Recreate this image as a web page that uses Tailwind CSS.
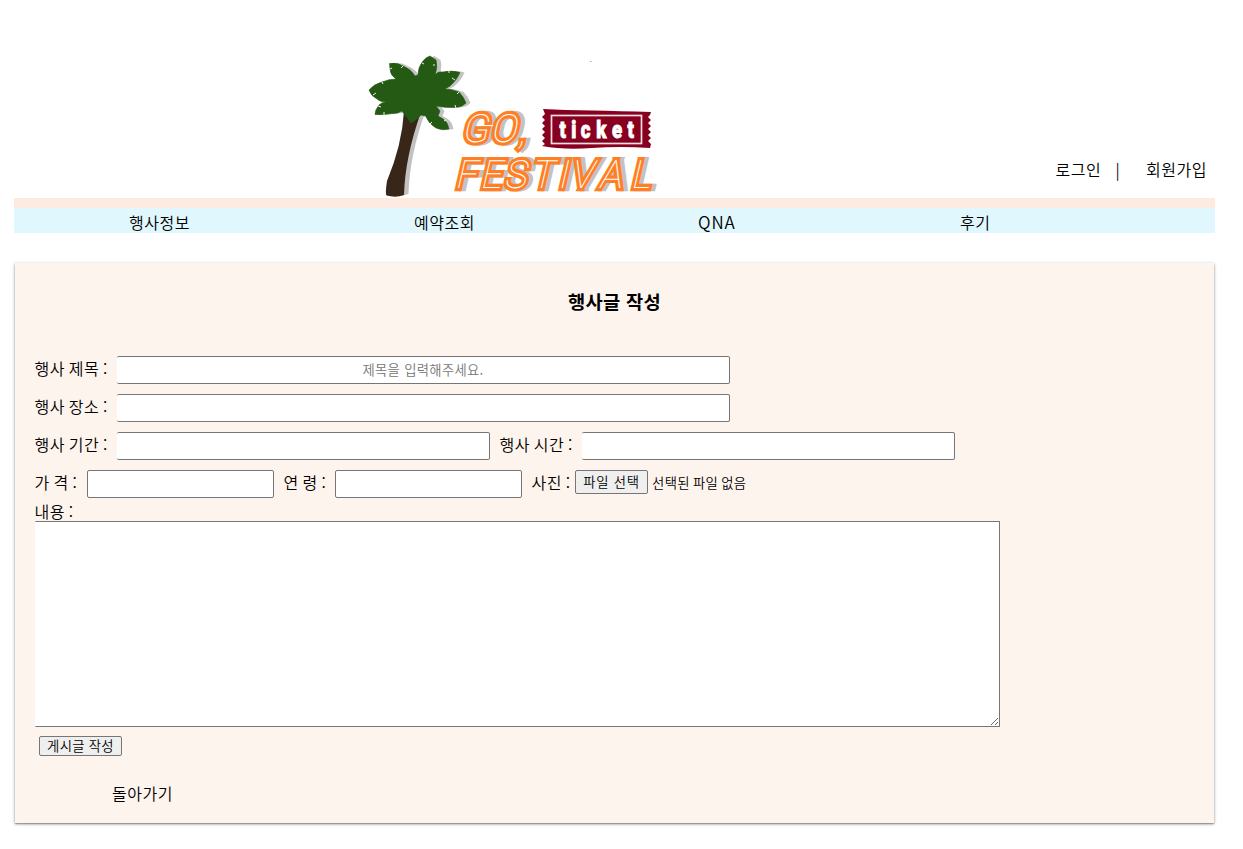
<!DOCTYPE html>
<html lang="ko">
<head>
<meta charset="utf-8">
<title>GO, FESTIVAL</title>
<script src="https://cdn.jsdelivr.net/npm/@tailwindcss/browser@4"></script>
</head>
<body class="bg-white font-['Noto_Sans_CJK_KR',sans-serif] font-[350] text-black text-base leading-6 tracking-[0.5px] w-[1243px] h-[849px] overflow-hidden pl-[15px]">
<header class="flex h-[198px] w-[1200px] items-start">
  <svg class="ml-[345px] mt-[50px] shrink-0" width="310" height="148" viewBox="360 50 310 148">
    <defs>
      <path id="leaves" d="M411 123L405 115L402 111Q397 114 392 113.500Q384 115 375 114.500Q375 110 379 105Q382 102 386 102Q380 102 377 99Q371 96 369 90Q374 84 382 82Q389 79 396 79Q390 75 390 69L389.500 63.500Q397 62 403 66Q411 69 415 76L418 75Q418 67 423 61Q426 57 430 56L436 60Q438 67 435 75Q438 71 443 72Q451 70 460 72.500Q457 80 450 86L445 89Q452 89 459 92Q464 97 466 103Q462 107 456 107.500Q446 108 436 106L440 111L438 116Q445 119 447.500 124L449 129Q442 131 436 128Q429 124 425.500 116L421 115Q418 119 411 123Z"/>
      <path id="bark" d="M404 111Q402 145 387 181Q385 194 386.500 195.500Q396 198 404 195Q405 157 421 112Z"/>
    </defs>
    <g fill="#c2c2c2" transform="translate(4.500 -1)"><use href="#bark"/><use href="#leaves" y="1"/></g>
    <use href="#bark" fill="#382619"/>
    <use href="#leaves" fill="#245a13" stroke="#245a13" stroke-width=".6"/>
    <path d="M390 69l2-1M403 66l-2 2M373 95l3-2M382 82l1 2M378 106l3 1M384 115l0-3M422 63l2 1M435 65l-2 0M449 70l0 3M455 80l-3-2M459 92l-2 2M456 108l-1-3M446 120l-2 1M430 124l2-2" stroke="#fff" stroke-width=".9"/>
    <g font-family="Roboto, sans-serif" font-weight="100" letter-spacing="0" stroke-linejoin="miter">
      <g fill="#c2c2c2" stroke="#c2c2c2" stroke-width="6.500">
        <text transform="translate(465 142) skewX(-13)" font-size="39" y="0 0 2" x="0 29 57">GO,</text>
        <text transform="translate(458.500 188) skewX(-13) scale(.96 1)" font-size="39" x="0 26 51 79 107 120 150 183">FESTIVAL</text>
      </g>
      <g fill="#fff" stroke="#ff7f27" stroke-width="6.500" paint-order="stroke">
        <text transform="translate(461 142) skewX(-13)" font-size="39" y="0 0 2" x="0 29 57">GO,</text>
        <text transform="translate(454.500 188) skewX(-13) scale(.96 1)" font-size="39" x="0 26 51 79 107 120 150 183">FESTIVAL</text>
      </g>
    </g>
    <path d="M543 109Q565 110 592 110.500T651 112L650 115L648 117L651 120L648 123L651 126L648 129L651 132L648 135L651 138L648 141L651 144L650 148Q620 146 592 148T542 146L545 144L542 141L545 138L542 135L545 132L542 129L545 126L542 123L545 120L542 117L545 114Z" fill="#880020"/>
    <rect x="551.500" y="115.500" width="90" height="28" fill="none" stroke="#f4dfe4" stroke-width="1.700"/>
    <text transform="translate(559.500 138) scale(.76 1)" font-family="Roboto, sans-serif" font-weight="900" font-size="24.500" fill="#fff" stroke="#fff" stroke-width=".9" letter-spacing="0" x="0 15.500 28 48.500 69 89.500">ticket</text>
    <rect x="590" y="61" width="1.500" height="1" fill="#aaa"/>
  </svg>
  <nav class="flex mt-[157px] ml-[385.500px] whitespace-nowrap">
    <a class="w-[60px]">로그인</a><span class="w-[30.500px]">|</span><a>회원가입</a>
  </nav>
</header>
<div class="-ml-px h-[10px] w-[1201px] bg-[#fdeae0]"></div>
<nav class="-ml-px flex h-[25px] w-[1201px] bg-[#e0f7fe] pl-[115px] leading-[28px] whitespace-nowrap">
  <a class="w-[285px]">행사정보</a><a class="w-[284px]">예약조회</a><a class="w-[262px] text-[17px] tracking-[0.9px]">QNA</a><a>후기</a>
</nav>
<main class="mt-[30px] h-[560px] w-[1199px] bg-[#fef4ee] pt-[23px] pl-5 shadow-[0_1px_3px_rgba(0,0,0,0.4),0_1px_1px_rgba(0,0,0,0.2)]">
  <h1 class="-ml-5 text-center text-[18.72px] leading-[30px] font-bold tracking-[0.3px]">행사글 작성</h1>
  <form class="mt-[40px] whitespace-nowrap [word-spacing:-1.2px]">
    <div class="flex h-[38px]"><label class="-ml-[0.5px] w-[82.500px]">행사 제목 :</label><input class="h-7 w-[613px] rounded-[2px] border border-l-0 border-[#767676] bg-white pb-[2px] text-center text-[13.333px] tracking-[0.3px] placeholder:text-[#757575]" placeholder="제목을 입력해주세요."></div>
    <div class="flex h-[38px]"><label class="-ml-[0.5px] w-[82.500px]">행사 장소 :</label><input class="h-7 w-[613px] rounded-[2px] border border-l-0 border-[#767676] bg-white"></div>
    <div class="flex h-[38px]"><label class="-ml-[0.5px] w-[82.500px]">행사 기간 :</label><input class="h-7 w-[373px] rounded-[2px] border border-l-0 border-[#767676] bg-white"><label class="ml-[9.500px] w-[82.500px]">행사 시간 :</label><input class="h-7 w-[373px] rounded-[2px] border border-l-0 border-[#767676] bg-white"></div>
    <div class="flex h-[30px]"><label class="-ml-[0.5px] w-[52.500px]">가 격 :</label><input class="h-7 w-[187px] rounded-[2px] border border-[#767676] bg-white"><label class="ml-[9.500px] w-[51.500px]">연 령 :</label><input class="h-7 w-[187px] rounded-[2px] border border-[#767676] bg-white"><label class="ml-[9.500px] w-[43.500px]">사진 :</label><button type="button" class="h-6 w-[73px] rounded-[2px] border border-[#767676] bg-[#efefef] text-[13.333px] leading-[22px] tracking-[0.7px]">파일 선택</button><span class="ml-1 text-[13.333px] leading-[26px] tracking-[0.4px]">선택된 파일 없음</span></div>
    <label class="-ml-[0.5px] block h-[21px] leading-[23px]">내용 :</label>
    <textarea class="block h-[206px] w-[965px] resize rounded-[1px] border border-l-0 border-[#767676] bg-white"></textarea>
    <button type="button" class="mt-[9px] ml-1 block h-5 w-[83px] rounded-[2px] border border-[#767676] bg-[#efefef] text-[13.333px] leading-[16px] tracking-[0.3px]">게시글 작성</button>
    <a class="mt-[25px] ml-[77px] block">돌아가기</a>
  </form>
</main>
</body>
</html>
